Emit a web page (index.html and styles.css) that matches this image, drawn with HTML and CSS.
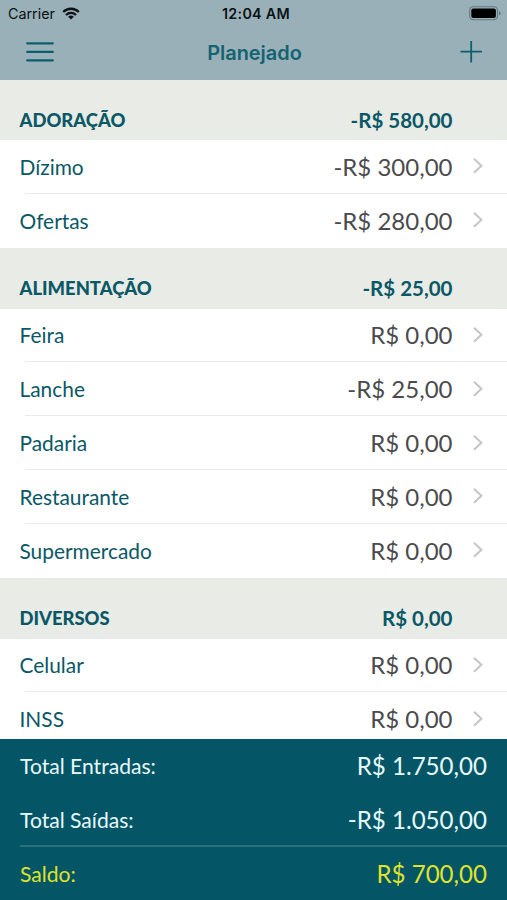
FILE: index.html
```html
<!DOCTYPE html>
<html lang="pt-BR">
<head>
  <meta charset="UTF-8" />
  <meta name="viewport" content="width=device-width, initial-scale=1" />
  <title>Planejado</title>
  <link rel="stylesheet" href="styles.css">
</head>
<body>

  <header>
    <div class="status-bar">
      <div class="carrier">
        <span>Carrier</span>
        <svg width="18" height="13" viewBox="0 0 18 13" fill="none" stroke="#0b1114" stroke-width="2.3">
          <path d="M1.2 5A11 11 0 0 1 16.8 5" />
          <path d="M4 8A7.1 7.1 0 0 1 14 8" />
          <path d="M9 12.6L6.2 9.8A4 4 0 0 1 11.8 9.8Z" fill="#0b1114" stroke="none" />
        </svg>
      </div>
      <span class="time">12:04 AM</span>
      <svg class="battery" width="32" height="15" viewBox="0 0 32 15">
        <rect x="0.7" y="0.7" width="27.8" height="13" rx="3.6" fill="none" stroke="#66777e" stroke-width="1.1" />
        <rect x="2.3" y="2.4" width="24.6" height="9.6" rx="2" fill="#000" />
        <path d="M30 5v4.4q1.6-.7 1.6-2.2T30 5z" fill="#66777e" />
      </svg>
    </div>
    <nav class="nav-bar">
      <button class="nav-button" aria-label="Menu">
        <svg width="28" height="22" viewBox="0 0 28 22" stroke="#0b5f6d" stroke-width="2.2" stroke-linecap="round">
          <path d="M1.2 2.3h25.6M1.2 10.9h25.6M1.2 19.4h25.6" />
        </svg>
      </button>
      <h1>Planejado</h1>
      <button class="nav-button" aria-label="Adicionar">
        <svg width="22" height="22" viewBox="0 0 22 22" stroke="#0b5f6d" stroke-width="1.8">
          <path d="M.5 10.6h21.4M11.2 0v21.4" />
        </svg>
      </button>
    </nav>
  </header>

  <main id="budget"></main>

  <footer>
    <div class="total"><span>Total Entradas:</span><span class="total-value">R$ 1.750,00</span></div>
    <div class="total"><span>Total Saídas:</span><span class="total-value">-R$ 1.050,00</span></div>
    <div class="total balance"><span>Saldo:</span><span class="total-value">R$ 700,00</span></div>
  </footer>

  <script>
    const groups = [
      { name: 'ADORAÇÃO', total: '-R$ 580,00', items: [
        ['Dízimo', '-R$ 300,00'],
        ['Ofertas', '-R$ 280,00'],
      ]},
      { name: 'ALIMENTAÇÃO', total: '-R$ 25,00', items: [
        ['Feira', 'R$ 0,00'],
        ['Lanche', '-R$ 25,00'],
        ['Padaria', 'R$ 0,00'],
        ['Restaurante', 'R$ 0,00'],
        ['Supermercado', 'R$ 0,00'],
      ]},
      { name: 'DIVERSOS', total: 'R$ 0,00', items: [
        ['Celular', 'R$ 0,00'],
        ['INSS', 'R$ 0,00'],
      ]},
    ];

    document.getElementById('budget').innerHTML = groups.map(g => `
      <section>
        <div class="group-header">
          <h2>${g.name}</h2>
          <span class="group-total">${g.total}</span>
        </div>
        <ul>
          ${g.items.map(([name, value]) => `
            <li class="item">
              <span class="item-name">${name}</span>
              <span class="item-value">${value}</span>
              <svg class="chevron" width="10" height="16" viewBox="0 0 10 16">
                <path d="M1 .8l7.4 7L1 14.8" />
              </svg>
            </li>
          `).join('')}
        </ul>
      </section>
    `).join('');
  </script>

</body>
</html>
```
FILE: styles.css
```css
* {
  box-sizing: border-box;
  margin: 0;
  padding: 0;
}

body {
  height: 100vh;
  display: flex;
  flex-direction: column;
  overflow: hidden;
  background: #fff;
  color: #0a5866;
  font-family: Lato, sans-serif;
}

header {
  flex: none;
  height: 80px;
  background: #9ab0b8;
}

.status-bar {
  display: grid;
  grid-template-columns: 1fr auto 1fr;
  align-items: center;
  height: 27px;
  padding: 0 6px 0 8px;
  color: #0b1114;
  font-family: Inter, sans-serif;
  font-size: 14.3px;
}

.carrier {
  display: flex;
  align-items: center;
  gap: 7px;
}

.time {
  padding-left: 3px;
  font-weight: 600;
  letter-spacing: 0.3px;
}

.battery {
  justify-self: end;
}

.nav-bar {
  display: flex;
  align-items: center;
  justify-content: space-between;
  height: 50px;
  padding: 0 24.5px 0 25.5px;
}

.nav-button {
  display: flex;
  background: none;
  border: none;
}

h1 {
  padding: 1px 5px 0 0;
  color: #146373;
  font-family: Inter, sans-serif;
  font-size: 19.9px;
  font-weight: 600;
}

main {
  flex: 1;
  min-height: 0;
  overflow: hidden;
}

.group-header {
  display: flex;
  justify-content: space-between;
  align-items: center;
  height: 61px;
  padding: 19px 54.5px 0 19.5px;
  background: #e8ebe6;
}

section:first-child .group-header {
  height: 60px;
}

h2 {
  font-size: 18.4px;
  font-weight: 900;
}

.group-total {
  font-size: 20.5px;
  font-weight: 700;
}

ul {
  list-style: none;
}

.item {
  display: flex;
  align-items: center;
  height: 53.8px;
  padding: 0 24px 1px 19.5px;
  background: linear-gradient(#e9ebea, #e9ebea) 25px 100% / 100% 1px no-repeat;
}

.item:last-child {
  background: none;
}

.item-name {
  flex: 1;
  font-size: 20.9px;
}

.item-value {
  color: #4b4b4d;
  font-size: 24px;
}

.chevron {
  margin-left: 20.5px;
  fill: none;
  stroke: #c5c5c9;
  stroke-width: 2;
}

footer {
  flex: none;
  height: 161px;
  padding-left: 20px;
  background: #045566;
  color: #e8fafc;
}

.total {
  display: flex;
  align-items: center;
  justify-content: space-between;
  height: 53.5px;
  padding-right: 20px;
  font-size: 21.1px;
}

.total-value {
  font-size: 24.1px;
}

.balance {
  height: 54px;
  margin-top: -1px;
  border-top: 2px solid #2d7080;
  color: #dfe32b;
}
```
